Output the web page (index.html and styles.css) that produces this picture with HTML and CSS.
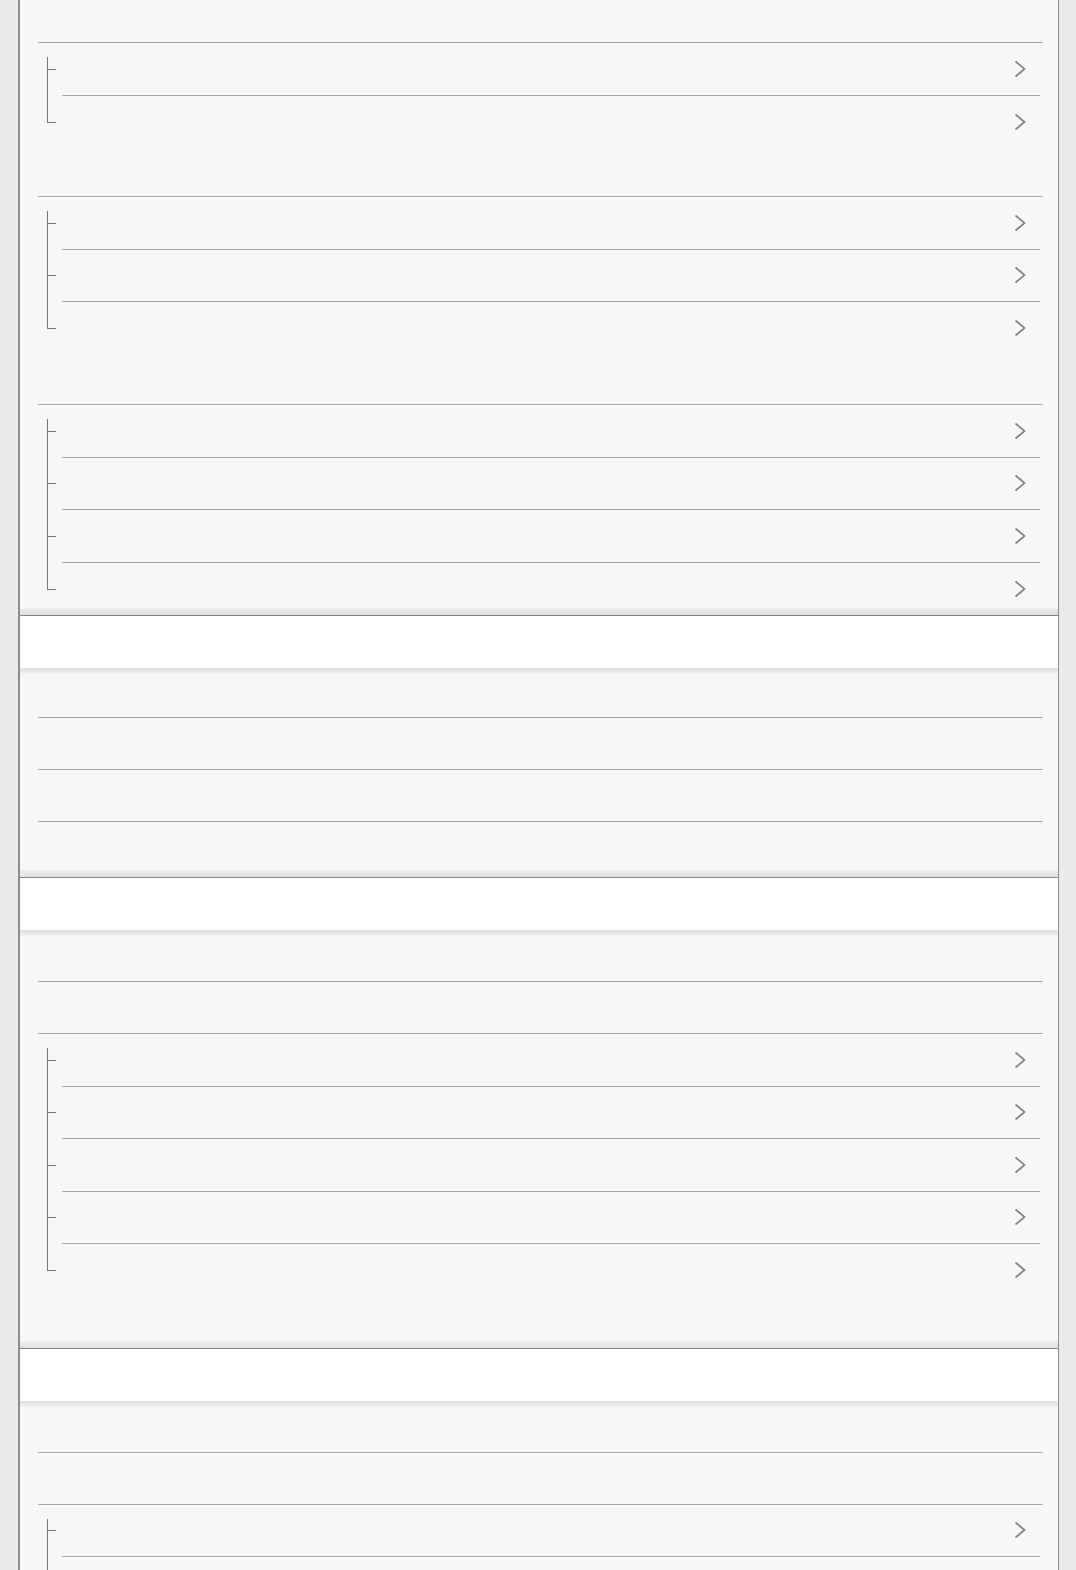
FILE: index.html
```html
<!DOCTYPE html>
<html lang="en">
<head>
  <meta charset="UTF-8">
  <title>Settings</title>
  <link rel="stylesheet" href="styles.css">
</head>
<body>
  <div class="page">

    <div class="panel">
      <div class="row top"></div>

      <div class="group">
        <div class="sub-list">
          <div class="sub-row"><svg class="chev" viewBox="0 0 12 18"><polyline points="1.5,1.5 10.5,9 1.5,16.5"/></svg></div>
          <div class="sub-row"><svg class="chev" viewBox="0 0 12 18"><polyline points="1.5,1.5 10.5,9 1.5,16.5"/></svg></div>
        </div>
        <div class="spacer"></div>
      </div>

      <div class="group">
        <div class="sub-list">
          <div class="sub-row"><svg class="chev" viewBox="0 0 12 18"><polyline points="1.5,1.5 10.5,9 1.5,16.5"/></svg></div>
          <div class="sub-row"><svg class="chev" viewBox="0 0 12 18"><polyline points="1.5,1.5 10.5,9 1.5,16.5"/></svg></div>
          <div class="sub-row"><svg class="chev" viewBox="0 0 12 18"><polyline points="1.5,1.5 10.5,9 1.5,16.5"/></svg></div>
        </div>
        <div class="spacer wide"></div>
      </div>

      <div class="group last">
        <div class="sub-list">
          <div class="sub-row"><svg class="chev" viewBox="0 0 12 18"><polyline points="1.5,1.5 10.5,9 1.5,16.5"/></svg></div>
          <div class="sub-row"><svg class="chev" viewBox="0 0 12 18"><polyline points="1.5,1.5 10.5,9 1.5,16.5"/></svg></div>
          <div class="sub-row"><svg class="chev" viewBox="0 0 12 18"><polyline points="1.5,1.5 10.5,9 1.5,16.5"/></svg></div>
          <div class="sub-row"><svg class="chev" viewBox="0 0 12 18"><polyline points="1.5,1.5 10.5,9 1.5,16.5"/></svg></div>
        </div>
      </div>
    </div>

    <div class="head"></div>

    <div class="panel">
      <div class="row short"></div>
      <div class="row"></div>
      <div class="row"></div>
      <div class="spacer tail"></div>
    </div>

    <div class="head"></div>

    <div class="panel">
      <div class="row"></div>
      <div class="row"></div>
      <div class="group last">
        <div class="sub-list">
          <div class="sub-row"><svg class="chev" viewBox="0 0 12 18"><polyline points="1.5,1.5 10.5,9 1.5,16.5"/></svg></div>
          <div class="sub-row"><svg class="chev" viewBox="0 0 12 18"><polyline points="1.5,1.5 10.5,9 1.5,16.5"/></svg></div>
          <div class="sub-row"><svg class="chev" viewBox="0 0 12 18"><polyline points="1.5,1.5 10.5,9 1.5,16.5"/></svg></div>
          <div class="sub-row"><svg class="chev" viewBox="0 0 12 18"><polyline points="1.5,1.5 10.5,9 1.5,16.5"/></svg></div>
          <div class="sub-row"><svg class="chev" viewBox="0 0 12 18"><polyline points="1.5,1.5 10.5,9 1.5,16.5"/></svg></div>
        </div>
        <div class="spacer end"></div>
      </div>
    </div>

    <div class="head"></div>

    <div class="panel">
      <div class="row"></div>
      <div class="row"></div>
      <div class="group">
        <div class="sub-list">
          <div class="sub-row"><svg class="chev" viewBox="0 0 12 18"><polyline points="1.5,1.5 10.5,9 1.5,16.5"/></svg></div>
          <div class="sub-row"><svg class="chev" viewBox="0 0 12 18"><polyline points="1.5,1.5 10.5,9 1.5,16.5"/></svg></div>
          <div class="sub-row"><svg class="chev" viewBox="0 0 12 18"><polyline points="1.5,1.5 10.5,9 1.5,16.5"/></svg></div>
        </div>
        <div class="spacer"></div>
      </div>
    </div>

  </div>
</body>
</html>
```

FILE: styles.css
```css
html {
  background: #ebebeb;
}

body {
  margin: 0;
  font-family: "Liberation Sans", Arial, sans-serif;
  color: #333;
}

.page {
  margin: 0 17px 0 18px;
  border-left: 2px solid #8c8c8c;
  border-right: 1px solid #8c8c8c;
  background: #f7f7f7;
}

.panel {
  padding: 0 15px 0 18px;
  background:
    linear-gradient(#f7f7f7, #ebebeb 1px, #e1e1e1) bottom / 100% 7px no-repeat,
    #f7f7f7;
}

.head + .panel {
  background:
    linear-gradient(#dfdfdf, #eeeeee 5px, #f7f7f7) top / 100% 6px no-repeat,
    linear-gradient(#f7f7f7, #ebebeb 1px, #e1e1e1) bottom / 100% 7px no-repeat,
    #f7f7f7;
}

.head {
  height: 52px;
  background: #fff;
  border-top: 1px solid #858585;
}

.row {
  box-sizing: border-box;
  height: 52px;
  border-bottom: 1px solid #a6a6a6;
}

.row.top {
  height: 43px;
}

.row.short {
  height: 50px;
}

.group {
  border-bottom: 1px solid #a6a6a6;
}

.group.last {
  border-bottom: none;
}

.sub-list {
  padding: 0 3px 0 24px;
}

.sub-row {
  box-sizing: border-box;
  height: 52.5px;
  border-bottom: 1px solid #a6a6a6;
  display: flex;
  align-items: center;
  justify-content: flex-end;
  padding-right: 14px;
  position: relative;
}

.sub-row:last-child {
  border-bottom: none;
}

/* tree lines */
.sub-row::before {
  content: "";
  position: absolute;
  left: -15px;
  top: 0;
  bottom: -1px;
  border-left: 1px solid #777;
}

.sub-row:first-child::before {
  top: 14px;
}

.sub-row:last-child::before {
  bottom: 50%;
}

.sub-row::after {
  content: "";
  position: absolute;
  left: -15px;
  top: 50%;
  width: 9px;
  height: 1px;
  background: #777;
}

.chev {
  width: 12px;
  height: 18px;
  fill: none;
  stroke: #858585;
  stroke-width: 1.8;
}

.spacer {
  height: 48px;
}

.spacer.wide {
  height: 49.5px;
}

.spacer.tail {
  height: 55px;
}

.spacer.end {
  height: 51px;
}
```
